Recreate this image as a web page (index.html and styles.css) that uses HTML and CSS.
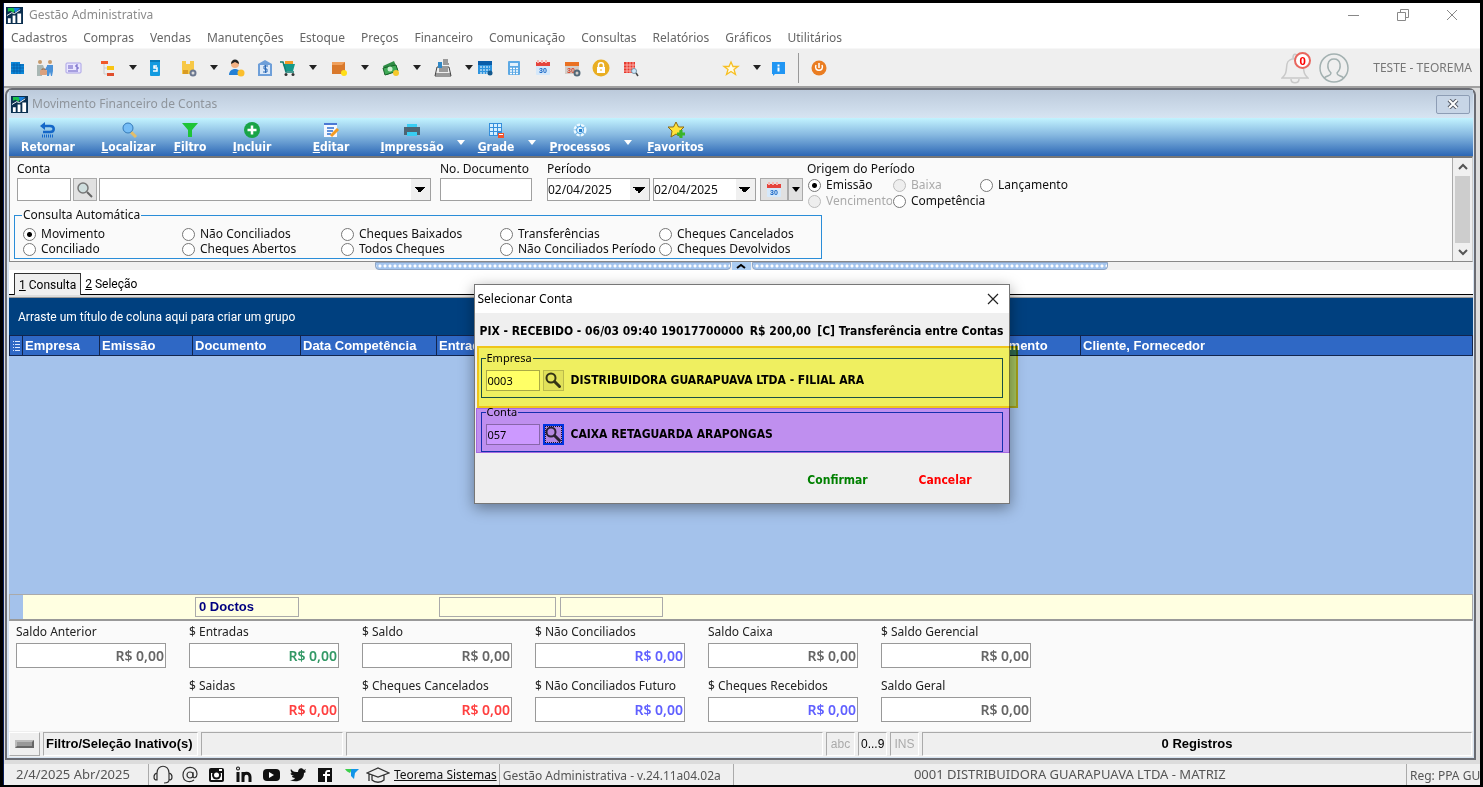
FILE: index.html
```html
<!DOCTYPE html>
<html lang="pt-BR">
<head>
<meta charset="UTF-8">
<meta name="viewport" content="width=device-width, initial-scale=1.0">
<title>Gestão Administrativa</title>
<link rel="stylesheet" href="styles.css">
</head>
<body>
<!-- símbolos reutilizados -->
<svg width="0" height="0" class="defs">
    <symbol id="app" viewBox="0 0 18 18"><rect width="18" height="18" fill="#0b2f4f"/><path d="M2 1h9l-3 5-3-2-3 1z" fill="#19c24a"/><path d="M8 1h7l-5 5z" fill="#1780e0"/><path d="M2 12h3v5H2zM7 9h3v8H7zM12 7h4v10h-4z" fill="#fff"/><path d="M1 9l5-3 3 1 6-4" stroke="#fff" fill="none"/></symbol>
    <symbol id="lupa" viewBox="0 0 18 18"><path d="M10.500 10.500l5 5" stroke="#333" stroke-width="3" stroke-linecap="round"/><circle cx="7" cy="7" r="4.500" fill="none" stroke="#333" stroke-width="2"/></symbol>
    <symbol id="cal" viewBox="0 0 18 18"><rect x="2" y="3" width="14" height="13" rx="1" fill="#d5e8fa"/><path d="M2 3h14v4H2z" fill="#e5443c"/><path d="M4 1v3M8 1v3M12 1v3" stroke="#f6b9b4" stroke-width="2"/><text x="9" y="14" text-anchor="middle" font-size="7" font-weight="bold" fill="#1463c4">30</text></symbol>
</svg>

<div class="app-window">
    <header class="titlebar">
        <svg class="app-icon"><use href="#app"/></svg>
        <span>Gestão Administrativa</span>
        <div class="window-controls">
            <button aria-label="Minimizar"><svg viewBox="0 0 12 12"><path d="M0 6.500h11" stroke="#888"/></svg></button>
            <button aria-label="Restaurar"><svg viewBox="0 0 12 12" fill="none" stroke="#888"><path d="M.5 3.500h8v8h-8zM3.500 3V.5h8v8H9"/></svg></button>
            <button aria-label="Fechar"><svg viewBox="0 0 12 12"><path d="M1 1l10 10M11 1L1 11" stroke="#888"/></svg></button>
        </div>
    </header>

    <nav class="menubar">
        <a href="#">Cadastros</a><a href="#">Compras</a><a href="#">Vendas</a><a href="#">Manutenções</a><a href="#">Estoque</a><a href="#">Preços</a><a href="#">Financeiro</a><a href="#">Comunicação</a><a href="#">Consultas</a><a href="#">Relatórios</a><a href="#">Gráficos</a><a href="#">Utilitários</a>
    </nav>

    <div class="toolbar">
        <button class="tool" aria-label="Empresa"><svg viewBox="0 0 18 18"><path d="M3 3h9v2h4v10H3z" fill="#0b87d9"/><path d="M3 6h13M3 9h13M3 12h13M6 4v11M9 4v11M12 5v10" stroke="#0658a0" stroke-width=".7"/></svg></button>
        <button class="tool" aria-label="Clientes"><svg viewBox="0 0 18 18"><circle cx="4" cy="3" r="2" fill="#c69a6b"/><circle cx="14" cy="3" r="2" fill="#c69a6b"/><path d="M1 6h6l2 5-3 1v5H1z" fill="#a9b7b4"/><path d="M11 6h6v6l-1 5h-1l-1-4-1 4h-2V11l-3 1 3-5z" fill="#4b92d8"/><rect x="4" y="11" width="7" height="5" rx="1" fill="#dba17e"/><path d="M6 11v-1h3v1" stroke="#a5673f" fill="none"/></svg></button>
        <button class="tool" aria-label="Cheque"><svg viewBox="0 0 18 18"><rect x="1" y="4" width="15" height="10" rx="1" fill="#e9e6ff" stroke="#aaa2e6"/><path d="M3 7h5M3 9h5M3 12h10M13 6h-2v2h2v2h-2" stroke="#6558c0" fill="none"/></svg></button>
        <div class="split"><button aria-label="Plano de contas"><svg viewBox="0 0 18 18"><path d="M3 2h7v3H3z" fill="#f1592a"/><path d="M9 7h7v4H9z" fill="#f9c513"/><path d="M9 14h7v3H9z" fill="#e04e2c"/><path d="M6 5v10h3M6 9h3" stroke="#ccc" fill="none"/></svg></button><button class="caret" aria-label="Mais opções do plano"></button></div>
        <button class="tool" aria-label="Celular"><svg viewBox="0 0 18 18"><rect x="4" y="1" width="10" height="16" rx="1" fill="#139be0"/><path d="M4 1h10v2H4z" fill="#087bb9"/><path d="M11 7H8v2h3v3H7" stroke="#fff" stroke-width="1.500" fill="none"/></svg></button>
        <div class="split"><button aria-label="Produtos"><svg viewBox="0 0 18 18"><path d="M3 2h4v3h4V2h4v13H3z" fill="#f7c846"/><path d="M4 11h5v4H4z" fill="#d99c24"/><circle cx="14" cy="14" r="2.500" fill="#ddd" stroke="#6c7890" stroke-width="2"/></svg></button><button class="caret" aria-label="Mais opções de produtos"></button></div>
        <button class="tool" aria-label="Vendedor"><svg viewBox="0 0 18 18"><circle cx="8" cy="5" r="4" fill="#f4b183"/><path d="M4 5c0-6 8-6 8 0l-4-2z" fill="#222"/><path d="M2 16c0-8 12-8 12 0z" fill="#2380d6"/><circle cx="14" cy="14" r="3.500" fill="#fbbf2e"/></svg></button>
        <button class="tool" aria-label="Banco"><svg viewBox="0 0 18 18"><path d="M9 1l7 4v12H2V5z" fill="#6e9fd9"/><path d="M4 6h10v9H4z" fill="#dce9f8"/><path d="M12 7H8v3h3v3H7M9.500 6v8" stroke="#2d6bb7" fill="none"/></svg></button>
        <div class="split split-tight"><button aria-label="Carrinho"><svg viewBox="0 0 18 18"><path d="M6 2h8v4H6z" fill="#f39a25"/><path d="M4 5h12l-2 7H7z" fill="#159a8a"/><path d="M1 3h3l3 10h8" stroke="#107c70" fill="none" stroke-width="1.500"/><circle cx="7" cy="15.500" r="1.500" fill="#333"/><circle cx="14" cy="15.500" r="1.500" fill="#333"/></svg></button><button class="caret" aria-label="Mais opções do carrinho"></button></div>
        <div class="split"><button aria-label="Caixas"><svg viewBox="0 0 18 18"><path d="M2 3h13v12H2z" fill="#d9792c"/><path d="M2 3h13l-3 3H2z" fill="#efa05d"/><circle cx="14" cy="14" r="3" fill="#ffdf18"/></svg></button><button class="caret" aria-label="Mais opções de caixas"></button></div>
        <div class="split"><button aria-label="Dinheiro"><svg viewBox="0 0 18 18"><path d="M1 7l11-5 4 9-11 5z" fill="#2f8d46"/><path d="M1 9l13-3 2 6-13 4z" fill="#3faa57" stroke="#176229"/><circle cx="8" cy="10" r="2.500" fill="#c9efcf"/><circle cx="14" cy="14" r="3" fill="#f6c92d"/></svg></button><button class="caret" aria-label="Mais opções de dinheiro"></button></div>
        <div class="split"><button aria-label="Caixa registradora"><svg viewBox="0 0 18 18"><path d="M3 8h12l2 9H1z" fill="#eee" stroke="#444"/><path d="M4 3h4v6H4z" fill="#3188c6"/><path d="M9 1h5M9 3h5M9 5h6M5 10h9M5 12h9M1 15h16" stroke="#444"/></svg></button><button class="caret" aria-label="Mais opções da caixa"></button></div>
        <div class="tool-group">
            <button class="tool" aria-label="Agenda"><svg viewBox="0 0 18 18"><path d="M2 2h14v13H2z" fill="#2d94df"/><path d="M2 2h14v4H2z" fill="#0b5da8"/><path d="M4 8h10M4 11h10M4 14h8" stroke="#fff" stroke-dasharray="2 1"/><circle cx="14" cy="14" r="2.500" fill="#14598e"/></svg></button>
            <button class="tool" aria-label="Calculadora"><svg viewBox="0 0 18 18"><rect x="3" y="2" width="12" height="14" rx="1" fill="#5da9e4"/><path d="M5 4h8v3H5z" fill="#e3f2fd"/><path d="M5 9.500h8M5 12h8M5 14.500h8" stroke="#fff" stroke-width="1.500" stroke-dasharray="2 1"/></svg></button>
            <button class="tool" aria-label="Calendário"><svg><use href="#cal"/></svg></button>
            <button class="tool" aria-label="Configurar calendário"><svg viewBox="0 0 18 18"><path d="M2 3h14v12H2z" fill="#d3cdc8"/><path d="M2 3h14v4H2z" fill="#ea7122"/><text x="8" y="14" text-anchor="middle" font-size="7" font-weight="bold" fill="#d84228">30</text><circle cx="14" cy="14" r="2.500" fill="none" stroke="#526878" stroke-width="2"/></svg></button>
            <button class="tool" aria-label="Bloquear"><svg viewBox="0 0 18 18"><circle cx="9" cy="9" r="8.500" fill="#e9ae22"/><path d="M5 8h8v6H5z" fill="#fff"/><path d="M6.500 8V6c0-3 5-3 5 0v2" stroke="#fff" stroke-width="1.500" fill="none"/><path d="M9 10v2" stroke="#e9ae22"/></svg></button>
            <button class="tool" aria-label="Pesquisar planilha"><svg viewBox="0 0 18 18"><path d="M3 3h11v11H3z" fill="#e6392e"/><path d="M3 6h11M3 9h11M3 12h11M6 3v11M9 3v11M12 3v11" stroke="#ffc2bd" stroke-width=".8"/><circle cx="13" cy="12" r="2.500" fill="#cce7fa" stroke="#7c97a9"/><path d="M15 14l2 3" stroke="#444" stroke-width="1.500"/></svg></button>
        </div>
        <div class="split split-star"><button aria-label="Favoritos"><svg viewBox="0 0 18 18"><path d="M9 3l2 4.500h5l-4 3 1.500 5L9 12.500l-4.500 3 1.500-5-4-3h5z" fill="#fffbe6" stroke="#f7bf22" stroke-width="1.300"/></svg></button><button class="caret" aria-label="Mais favoritos"></button></div>
        <button class="tool" aria-label="Informações"><svg viewBox="0 0 18 18"><path d="M2 3h13v12H5l-2 2v-2H2z" fill="#2196f3"/><path d="M8.500 5.500v2M8.500 8.500v4" stroke="#fff" stroke-width="2"/></svg></button>
        <span class="tool-separator"></span>
        <button class="tool" aria-label="Sair"><svg viewBox="0 0 18 18"><circle cx="9" cy="9" r="7.500" fill="#ea7d22"/><path d="M6 6c-3 7 9 7 6 0M9 4v5" stroke="#fff" stroke-width="1.500" fill="none"/></svg></button>
        <div class="user">
            <button class="bell" aria-label="Notificações"><svg viewBox="0 0 28 32" fill="none" stroke="#c9c9c9" stroke-width="1.500"><path d="M1 26c5-4 4-8 5-14 1-7 15-7 16 0 1 6 0 10 5 14zM10 27c0 5 8 5 8 0M12 6c0-5 4-5 4 0"/></svg><span class="badge">0</span></button>
            <svg class="avatar" viewBox="0 0 30 30" fill="none" stroke="#a3b1b1" stroke-width="1.500"><circle cx="15" cy="15" r="14"/><path d="M5 25c4-3 7-2 7-5-5-5-4-14 3-14s8 9 3 14c0 3 3 2 7 5"/></svg>
            <span>TESTE - TEOREMA</span>
        </div>
    </div>

    <main class="mdi">
        <section class="child-window">
            <header class="child-title">
                <svg class="app-icon"><use href="#app"/></svg>
                <span>Movimento Financeiro de Contas</span>
                <button class="child-close" aria-label="Fechar janela"><svg viewBox="0 0 12 10"><path d="M2 1l8 8M10 1L2 9" stroke="#555b66" stroke-width="4"/><path d="M2 1l8 8M10 1L2 9" stroke="#fff" stroke-width="2"/></svg></button>
            </header>

            <div class="ribbon">
                <button><svg viewBox="0 0 18 18"><path d="M5 5h6c5 0 5 6 0 6H4" stroke="#1467c8" stroke-width="2.500" fill="none"/><path d="M6 1v8L1 5z" fill="#1467c8"/><path d="M3 15h11" stroke="#1467c8" stroke-width="3" stroke-dasharray="1 1"/></svg>Retornar</button>
                <button><svg viewBox="0 0 18 18"><path d="M11 11l5 5" stroke="#e4bd68" stroke-width="3"/><circle cx="8" cy="7" r="5" fill="#76bdf6" stroke="#357ab8"/></svg><span><u>L</u>ocalizar</span></button>
                <button><svg viewBox="0 0 18 18"><path d="M1 2h16l-6 7v7H7V9z" fill="#1fc437"/></svg><span><u>F</u>iltro</span></button>
                <button><svg viewBox="0 0 18 18"><circle cx="9" cy="9" r="8" fill="#19a447"/><path d="M9 4.500v9M4.500 9h9" stroke="#fff" stroke-width="2.500"/></svg><span><u>I</u>ncluir</span></button>
                <button><svg viewBox="0 0 18 18"><path d="M2 2h13v14H2z" fill="#f5f8ff"/><path d="M2 2h13v2H2z" fill="#4a78d4"/><path d="M5 7h7M5 10h6M5 13h4" stroke="#316fd0" stroke-width="1.500"/><path d="M9 15l7-7" stroke="#f39b24" stroke-width="3"/></svg><span><u>E</u>ditar</span></button>
                <button><svg viewBox="0 0 18 18"><path d="M4 3h10v4H4z" fill="#38cdf3"/><path d="M1 6h16v8H1z" fill="#4d6473"/><path d="M4 11h10v4H4z" fill="#38cdf3"/></svg><span><u>I</u>mpressão</span></button>
                <button class="ribbon-caret" aria-label="Opções de impressão"></button>
                <button><svg viewBox="0 0 18 18"><path d="M2 2h13v13H2z" fill="#358fdb"/><path d="M3 3h3v3H3zM7 3h3v3H7zM11 3h3v3h-3zM3 7h3v3H3zM7 7h3v3H7zM11 7h3v3h-3zM3 11h3v3H3zM7 11h3v3H7z" fill="#d5efff"/><path d="M11 12h6v5h-6z" fill="#f0542d"/><path d="M12 13.500h4" stroke="#fff"/></svg><span><u>G</u>rade</span></button>
                <button class="ribbon-caret" aria-label="Opções de grade"></button>
                <button><svg viewBox="0 0 18 18"><circle cx="9" cy="9" r="5" fill="#55a9e8" stroke="#eaf8ff" stroke-width="3" stroke-dasharray="3 1"/><circle cx="9" cy="9" r="3.500" fill="#e4f5ff" stroke="#4a9de0"/><path d="M8 8h3v3H8z" fill="#2a7fc9"/></svg><span><u>P</u>rocessos</span></button>
                <button class="ribbon-caret" aria-label="Opções de processos"></button>
                <button><svg viewBox="0 0 18 18"><path d="M9 1l2.500 5H17l-4 4 1 6-5-3-5 3 1-6-4-4h5.500z" fill="#ffe23a" stroke="#8c6b14"/><path d="M14 9v8M10 13h8" stroke="#3ab52a" stroke-width="3"/></svg><span><u>F</u>avoritos</span></button>
            </div>

            <form class="filters">
                <div class="filters-body">
                    <div class="filter-row">
                        <div class="field">
                            <label for="conta">Conta</label>
                            <div class="controls">
                                <input id="conta" class="box conta" type="text">
                                <button type="button" class="grey-btn search" aria-label="Pesquisar conta"><svg viewBox="0 0 18 18"><path d="M11 11l5 5" stroke="#666" stroke-width="2"/><circle cx="7" cy="7" r="5" fill="#cfdede" stroke="#777" stroke-width="1.500"/></svg></button>
                                <select class="box combo" aria-label="Nome da conta"><option></option></select>
                            </div>
                        </div>
                        <div class="field field-doc">
                            <label for="doc">No. Documento</label>
                            <div class="controls"><input id="doc" class="box doc" type="text"></div>
                        </div>
                        <div class="field">
                            <label for="inicio">Período</label>
                            <div class="controls period">
                                <select id="inicio" class="box date"><option>02/04/2025</option></select>
                                <select class="box date" aria-label="Fim do período"><option>02/04/2025</option></select>
                                <div class="cal-split">
                                    <button type="button" class="grey-btn cal" aria-label="Calendário do período"><svg><use href="#cal"/></svg></button><button type="button" class="grey-btn cal-drop" aria-label="Opções do período"><i class="down"></i></button>
                                </div>
                            </div>
                        </div>
                        <div class="field origin">
                            <span class="origin-title">Origem do Período</span>
                            <div class="origin-grid">
                                <label><input type="radio" name="origem" checked>Emissão</label>
                                <label class="off"><input type="radio" name="origem" disabled>Baixa</label>
                                <label><input type="radio" name="origem">Lançamento</label>
                                <label class="off"><input type="radio" name="origem" disabled>Vencimento</label>
                                <label><input type="radio" name="origem">Competência</label>
                            </div>
                        </div>
                    </div>
                    <fieldset class="auto-query">
                        <legend>Consulta Automática</legend>
                        <div class="radio-grid">
                            <label><input type="radio" name="auto" checked>Movimento</label>
                            <label><input type="radio" name="auto">Não Conciliados</label>
                            <label><input type="radio" name="auto">Cheques Baixados</label>
                            <label><input type="radio" name="auto">Transferências</label>
                            <label><input type="radio" name="auto">Cheques Cancelados</label>
                            <label><input type="radio" name="auto">Conciliado</label>
                            <label><input type="radio" name="auto">Cheques Abertos</label>
                            <label><input type="radio" name="auto">Todos Cheques</label>
                            <label><input type="radio" name="auto">Não Conciliados Período</label>
                            <label><input type="radio" name="auto">Cheques Devolvidos</label>
                        </div>
                    </fieldset>
                </div>
                <div class="scrollbar">
                    <button type="button" aria-label="Rolar para cima"><svg viewBox="0 0 10 10"><path d="M1 7l4-4 4 4" stroke="#555" stroke-width="2" fill="none"/></svg></button>
                    <span class="thumb"></span>
                    <button type="button" aria-label="Rolar para baixo"><svg viewBox="0 0 10 10"><path d="M1 3l4 4 4-4" stroke="#555" stroke-width="2" fill="none"/></svg></button>
                </div>
            </form>

            <div class="splitter">
                <span class="dots"></span>
                <button aria-label="Recolher filtros"><svg viewBox="0 0 10 6"><path d="M1 5l4-3 4 3" stroke="#000" stroke-width="2" fill="none"/></svg></button>
                <span class="dots"></span>
            </div>

            <div class="tabs">
                <button class="tab active"><span><u>1</u> Consulta</span></button>
                <button class="tab"><span><u>2</u> Seleção</span></button>
            </div>

            <div class="grid">
                <p class="group-bar">Arraste um título de coluna aqui para criar um grupo</p>
                <table class="grid-head">
                    <colgroup><col class="c-mark"><col class="c-empresa"><col class="c-emissao"><col class="c-doc"><col class="c-data"><col class="c-entradas"><col class="c-meio"><col class="c-lanc"><col></colgroup>
                    <thead>
                        <tr>
                            <th><svg viewBox="0 0 9 12"><path d="M1 1.500h1M1 4.500h1M1 7.500h1M1 10.500h1M3 1.500h5M3 4.500h5M3 7.500h5M3 10.500h5" stroke="#dce8ff"/></svg></th>
                            <th>Empresa</th><th>Emissão</th><th>Documento</th><th>Data Competência</th><th>Entradas</th><th></th><th>Lançamento</th><th>Cliente, Fornecedor</th>
                        </tr>
                    </thead>
                </table>
                <div class="grid-body"></div>
                <div class="grid-foot">
                    <span class="foot-mark"></span>
                    <span class="foot-box foot-docs">0 Doctos</span>
                    <span class="foot-box foot-in"></span>
                    <span class="foot-box foot-out"></span>
                </div>
            </div>

            <div class="summary">
                <div class="total"><label for="t1">Saldo Anterior</label><input id="t1" value="R$ 0,00" readonly></div>
                <div class="total green"><label for="t2">$ Entradas</label><input id="t2" value="R$ 0,00" readonly></div>
                <div class="total"><label for="t3">$ Saldo</label><input id="t3" value="R$ 0,00" readonly></div>
                <div class="total blue"><label for="t4">$ Não Conciliados</label><input id="t4" value="R$ 0,00" readonly></div>
                <div class="total"><label for="t5">Saldo Caixa</label><input id="t5" value="R$ 0,00" readonly></div>
                <div class="total"><label for="t6">$ Saldo Gerencial</label><input id="t6" value="R$ 0,00" readonly></div>
                <div class="total red second-row"><label for="t7">$ Saidas</label><input id="t7" value="R$ 0,00" readonly></div>
                <div class="total red"><label for="t8">$ Cheques Cancelados</label><input id="t8" value="R$ 0,00" readonly></div>
                <div class="total blue"><label for="t9">$ Não Conciliados Futuro</label><input id="t9" value="R$ 0,00" readonly></div>
                <div class="total blue"><label for="t10">$ Cheques Recebidos</label><input id="t10" value="R$ 0,00" readonly></div>
                <div class="total"><label for="t11">Saldo Geral</label><input id="t11" value="R$ 0,00" readonly></div>
            </div>

            <footer class="child-status">
                <button class="led" aria-label="Filtro"><span></span></button>
                <span class="cell cell-filter">Filtro/Seleção Inativo(s)</span>
                <span class="cell cell-a"></span>
                <span class="cell cell-b"></span>
                <span class="cell cell-key off">abc</span>
                <span class="cell cell-key">0...9</span>
                <span class="cell cell-key off">INS</span>
                <span class="cell cell-count">0 Registros</span>
            </footer>
        </section>
    </main>

    <footer class="statusbar">
        <span class="sb-date">2/4/2025 Abr/2025</span>
        <div class="social">
            <a href="#" aria-label="Suporte"><svg viewBox="0 0 20 20" fill="none" stroke="#333" stroke-width="1.200"><path d="M4 13V9c0-9 12-9 12 0v7c0 2-2 3-5 3M4 9c-4 1-4 7 0 7zM16 9c4 1 4 7 0 7z"/></svg></a>
            <a href="#" aria-label="E-mail"><svg viewBox="0 0 20 20" fill="none" stroke="#333" stroke-width="1.200"><circle cx="10" cy="11" r="3"/><path d="M13 8v4c0 3 4 2 4-2 0-9-14-9-14 1 0 7 7 8 11 5"/></svg></a>
            <a href="#" aria-label="Instagram"><svg viewBox="0 0 20 20"><rect x="2" y="4" width="15" height="14" rx="2" fill="#111"/><path d="M4 9h11v7H4z" fill="#fff"/><circle cx="9.500" cy="11" r="4.500" fill="#111"/><circle cx="9.500" cy="11" r="2.500" fill="#fff"/><path d="M12 5h3v2h-3z" fill="#fff"/></svg></a>
            <a href="#" aria-label="LinkedIn"><svg viewBox="0 0 20 20" fill="none" stroke="#111" stroke-width="3"><path d="M4 8v10M9 8v10M9 13c0-5 7-5 7 0v5"/><circle cx="4" cy="4.500" r=".5"/></svg></a>
            <a href="#" aria-label="YouTube"><svg viewBox="0 0 20 20"><rect x="2" y="5" width="17" height="12" rx="4" fill="#111"/><path d="M8 8l5 3-5 3z" fill="#fff"/></svg></a>
            <a href="#" aria-label="Twitter"><svg viewBox="0 0 20 20"><path d="M3 5c2 3 4 3 7 3 0-4 4-5 6-2l2-1-1 2 1 1-2 1c0 8-8 10-14 7 2 0 4 0 5-2-2 0-3-1-3-2h2c-3-1-4-2-3-3l1 .5C3 8 2 6 3 5z" fill="#111"/></svg></a>
            <a href="#" aria-label="Facebook"><svg viewBox="0 0 20 20"><path d="M3 4h14v14H3z" fill="#111"/><path d="M15 7h-2c-2 0-2 1-2 3v8M8 11h7" stroke="#fff" stroke-width="2" fill="none"/></svg></a>
            <a href="#" aria-label="Site"><svg viewBox="0 0 20 20"><path d="M3 5h7l-2 4C6 8 4 7 3 5z" fill="#3dcf4b"/><path d="M9 5h8l-4 4-1 6-3-3z" fill="#1395e8"/></svg></a>
            <a href="#" class="cap" aria-label="Cursos"><svg viewBox="0 0 24 20" fill="none" stroke="#333" stroke-width="1.300"><path d="M1 9l11-5 11 5-11 4zM6 11v5c3 3 9 3 12 0v-5M3 10v7"/></svg></a>
        </div>
        <a href="#" class="sb-link">Teorema Sistemas</a>
        <span class="sb-version">Gestão Administrativa - v.24.11a04.02a</span>
        <span class="sb-company">0001 DISTRIBUIDORA GUARAPUAVA LTDA - MATRIZ</span>
        <span class="sb-reg">Reg: PPA GUARAPUAVA</span>
    </footer>
</div>

<div class="dialog" role="dialog" aria-label="Selecionar Conta">
    <header class="dialog-title">
        <span>Selecionar Conta</span>
        <button aria-label="Fechar diálogo"><svg viewBox="0 0 12 12"><path d="M1 1l10 10M11 1L1 11" stroke="#222" stroke-width="1.200"/></svg></button>
    </header>
    <p class="dialog-info"><span>PIX - RECEBIDO - 06/03 09:40 19017700000</span><span>R$ 200,00</span><span>[C] Transferência entre Contas</span></p>
    <fieldset class="pick">
        <legend>Empresa</legend>
        <input type="text" value="0003" aria-label="Código da empresa">
        <button aria-label="Pesquisar empresa"><svg><use href="#lupa"/></svg></button>
        <strong>DISTRIBUIDORA GUARAPUAVA LTDA - FILIAL ARA</strong>
    </fieldset>
    <fieldset class="pick">
        <legend>Conta</legend>
        <input type="text" value="057" aria-label="Código da conta">
        <button class="focused" aria-label="Pesquisar conta destino"><svg><use href="#lupa"/></svg></button>
        <strong>CAIXA RETAGUARDA ARAPONGAS</strong>
    </fieldset>
    <div class="dialog-actions">
        <button class="confirm">Confirmar</button>
        <button class="cancel">Cancelar</button>
    </div>
</div>
<!-- marcações de destaque sobre o diálogo -->
<div class="mark mark-yellow"></div>
<div class="mark mark-purple"></div>
</body>
</html>
```

FILE: styles.css
```css
* {
    box-sizing: border-box;
}

body {
    margin: 0;
    min-height: 100vh;
    display: flex;
    position: relative;
    background-color: #000;
    font-family: "Noto Sans", "Open Sans", sans-serif;
    font-size: 12px;
    line-height: 16px;
    color: #222;
    overflow: hidden;
}

button {
    border: 0;
    padding: 0;
    background: none;
    font: inherit;
    color: inherit;
    display: flex;
    align-items: center;
    justify-content: center;
}

input, select {
    font: inherit;
    color: inherit;
}

a {
    color: inherit;
    text-decoration: none;
}

p {
    margin: 0;
}

svg {
    display: block;
    flex: none;
    width: 18px;
    height: 18px;
}

svg text {
    font-family: "Liberation Sans", sans-serif;
}

.defs {
    position: absolute;
    width: 0;
    height: 0;
}

.app-window {
    flex: 1;
    min-width: 0;
    margin: 3px 3px 2px 3px;
    border-left: 1px solid #0a1f5c;
    display: flex;
    flex-direction: column;
    background-color: #fff;
}

/* barra de título */
.titlebar {
    height: 24px;
    display: flex;
    align-items: center;
    gap: 6px;
    padding-left: 2px;
    color: #8c8c8c;
}

.app-icon {
    width: 17px;
    height: 17px;
}

.window-controls {
    margin-left: auto;
    margin-right: 4px;
    display: flex;
    height: 20px;
}

.window-controls button {
    width: 49px;
}

.window-controls svg {
    width: 12px;
    height: 12px;
}

.menubar {
    height: 21px;
    display: flex;
    align-items: center;
    gap: 16px;
    padding-left: 7px;
    color: #666;
}

/* barra de ferramentas */
.toolbar {
    height: 38px;
    display: flex;
    align-items: center;
    background-color: #efefef;
    border-top: 1px solid #f7f7f7;
}

.tool {
    width: 29px;
    height: 30px;
}

.toolbar > .tool:first-child {
    width: 26px;
}

.split {
    width: 52px;
    height: 30px;
    padding: 0 3px 0 10px;
    display: flex;
    align-items: center;
    justify-content: space-between;
}

.split-tight {
    width: 41px;
    padding-left: 0;
}

.split-star {
    margin-left: 68px;
}

.caret {
    border: 4px solid transparent;
    border-top: 5px solid #222;
    border-bottom: 0;
}

.tool-group {
    display: flex;
    margin-left: -6px;
}

.tool-separator {
    width: 1px;
    height: 30px;
    margin: 0 5px;
    background-color: #999;
}

.user {
    margin-left: auto;
    margin-right: 8px;
    display: flex;
    align-items: center;
    color: #777;
}

.bell {
    position: relative;
    margin-right: 10px;
}

.bell svg {
    width: 28px;
    height: 32px;
}

.badge {
    position: absolute;
    top: 0;
    right: -2px;
    width: 17px;
    height: 17px;
    border: 2px solid #e8665e;
    border-radius: 9px;
    background-color: #fff;
    color: #f00;
    font-size: 11px;
    font-weight: bold;
    line-height: 13px;
}

.avatar {
    width: 30px;
    height: 30px;
    margin-right: 24px;
}

/* área da janela filha */
.mdi {
    flex: 1;
    display: flex;
    padding: 2px 4px 4px 1px;
    background: linear-gradient(#a0a0a0 2px, #dcdcdc 2px);
}

.child-window {
    flex: 1;
    min-width: 0;
    display: flex;
    flex-direction: column;
    border: 2px solid #6a6c73;
    border-radius: 7px 7px 0 0;
    padding: 0 1px 1px 2px;
    background-color: #d7e4f2;
}

.child-title {
    height: 28px;
    display: flex;
    align-items: center;
    gap: 4px;
    padding: 0 3px 0 2px;
    background: linear-gradient(#bccadb, #d6e4f2);
    color: #8f959c;
}

.child-close {
    width: 34px;
    height: 19px;
    margin-left: auto;
    border: 1px solid #8d9db5;
    border-radius: 2px;
    background-color: #c7d5e6;
}

.child-close svg {
    width: 12px;
    height: 10px;
}

.ribbon {
    height: 38px;
    display: grid;
    grid-template-columns: 78px 83px 40px 84px 74px 88px 10px 60px 12px 84px 12px 83px;
    padding-top: 3px;
    background: linear-gradient(#c2f3ff, #86b8e0 45%, #2c67b5);
    color: #fff;
    font-family: "DejaVu Sans Condensed", "DejaVu Sans", sans-serif;
    font-weight: bold;
    text-shadow: 1px 1px 1px #2b5a95;
}

.ribbon button {
    flex-direction: column;
    justify-content: flex-start;
}

.ribbon .ribbon-caret {
    align-self: end;
    justify-self: center;
    margin-bottom: 11px;
    border: 4px solid transparent;
    border-top: 5px solid #fff;
    border-bottom: 0;
}

/* filtros */
.filters {
    height: 106px;
    display: flex;
    border: 1px solid #888;
    border-top: 2px solid #777;
    border-right-color: #ccc;
    background-color: #fafafa;
    color: #111;
    overflow: hidden;
}

.filters-body {
    flex: 1;
    padding: 3px 0 0 4px;
}

.filter-row {
    display: flex;
    height: 46px;
    padding-left: 3px;
}

.field {
    display: flex;
    flex-direction: column;
}

.field-doc {
    margin: 0 15px 0 9px;
}

.controls {
    display: flex;
    gap: 2px;
    height: 23px;
    margin-top: 1px;
}

.period {
    gap: 3px;
}

.box {
    height: 23px;
    border: 1px solid #a0a0a0;
    border-radius: 0;
    background-color: #fff;
    padding: 0 2px;
}

.conta {
    width: 54px;
}

select.box {
    appearance: none;
    background-image: linear-gradient(to left bottom, #000 50%, transparent 50%), linear-gradient(to right bottom, #000 50%, transparent 50%), linear-gradient(#f0f0f0, #f0f0f0);
    background-size: 6px 6px, 6px 6px, 19px 100%;
    background-position: right 10px center, right 4px center, right center;
    background-repeat: no-repeat;
}

.combo {
    width: 332px;
}

.doc {
    width: 92px;
}

.date {
    width: 103px;
    padding-left: 0;
}

.grey-btn {
    height: 23px;
    border: 1px solid #aaa;
    background-color: #e1e1e1;
}

.search {
    width: 24px;
}

.cal-split {
    display: flex;
    margin-left: 1px;
}

.cal {
    width: 28px;
}

.cal-drop {
    width: 15px;
}

.down {
    border: 4px solid transparent;
    border-top: 5px solid #000;
    border-bottom: 0;
}

.origin {
    margin-left: 4px;
}

.origin-grid {
    display: grid;
    grid-template-columns: 85px 87px 120px;
}

.origin-grid label, .radio-grid label {
    display: flex;
    align-items: center;
    height: 16px;
    white-space: nowrap;
}

.origin-grid .off {
    overflow: hidden;
}

.off {
    color: #aaa;
}

input[type="radio"] {
    appearance: none;
    flex: none;
    width: 13px;
    height: 13px;
    margin: 0 5px 0 1px;
    border: 1px solid #777;
    border-radius: 50%;
    background-color: #fff;
}

input[type="radio"]:checked {
    background-image: radial-gradient(#000 2px, transparent 3px);
}

input[type="radio"]:disabled {
    border-color: #bbb;
    background-color: #eee;
}

.auto-query {
    width: 808px;
    margin: 0;
    padding: 3px 0 0 7px;
    border: 1px solid #2a8dd8;
    height: 52px;
}

.auto-query legend {
    padding: 0 1px;
}

.radio-grid {
    display: grid;
    grid-template-columns: repeat(5, 159px);
    grid-auto-rows: 15px;
}

.scrollbar {
    width: 20px;
    display: flex;
    flex-direction: column;
    border-left: 1px solid #aaa;
    background-color: #f0f0f0;
}

.scrollbar button {
    height: 18px;
}

.scrollbar svg {
    width: 10px;
    height: 10px;
}

.thumb {
    flex: 1;
    margin: 0 2px;
    background-color: #cdcdcd;
}

.splitter {
    height: 8px;
    display: flex;
    justify-content: center;
    background-color: #f0f0f0;
}

.splitter .dots {
    width: 356px;
    background: radial-gradient(circle at 2px 2px, #fff 1px, transparent 2px) 2px 1px / 5px 8px #a4c5ee;
    border: 1px solid #8fa5c4;
    border-radius: 0 0 4px 4px;
}

.splitter button {
    width: 19px;
    margin: 0 1px;
    background-color: #a9cbf1;
}

.splitter svg {
    width: 10px;
    height: 6px;
}

/* abas */
.tabs {
    height: 27px;
    display: flex;
    align-items: flex-start;
    padding: 3px 0 0 5px;
    background: linear-gradient(#fff 24px, #000 24px, #000 25px, #ddd 25px);
    color: #000;
    font-family: Roboto, "Liberation Sans", sans-serif;
}

.tab {
    height: 22px;
    padding: 0 4px;
}

.tab.active {
    border: 1px solid #333;
    border-bottom: 0;
    background-color: #efefef;
}

/* grade */
.grid, .child-status {
    font-family: "Liberation Sans", Arial, sans-serif;
}

.grid {
    flex: 1;
    display: flex;
    flex-direction: column;
    border-top: 1px solid #999;
}

.group-bar {
    height: 38px;
    margin-bottom: -1px;
    padding: 11px 9px;
    background-color: #00407f;
    color: #fff;
    font-family: Roboto, "Liberation Sans", sans-serif;
}

.grid-head {
    width: 100%;
    table-layout: fixed;
    border-collapse: collapse;
    background-color: #2f68c5;
    color: #fff;
}

.grid-head th {
    height: 20px;
    padding: 0 2px;
    border: 1px solid #12254d;
    font-size: 13px;
    text-align: left;
    white-space: nowrap;
}

.grid-head svg {
    width: 9px;
    height: 12px;
}

.c-mark { width: 13px; }
.c-empresa { width: 77px; }
.c-emissao { width: 93px; }
.c-doc { width: 108px; }
.c-data { width: 136px; }
.c-entradas { width: 122px; }
.c-meio { width: 410px; }
.c-lanc { width: 112px; }

.grid-body {
    flex: 1;
    background-color: #a4c2eb;
}

.grid-foot {
    height: 27px;
    display: flex;
    align-items: center;
    border: 1px solid #aaa;
    border-bottom: 2px solid #999;
    background-color: #ffffe1;
    color: #000080;
    font-size: 13px;
    font-weight: bold;
}

.foot-mark {
    width: 13px;
    height: 100%;
    background-color: #a4c2eb;
}

.foot-box {
    height: 20px;
    border: 1px solid #aaa;
    padding: 1px 3px;
}

.foot-docs {
    width: 104px;
    margin-left: 172px;
}

.foot-in {
    width: 117px;
    margin: 0 4px 0 140px;
}

.foot-out {
    width: 103px;
}

/* totais */
.summary {
    height: 110px;
    display: grid;
    grid-template-columns: repeat(6, 150px);
    grid-auto-rows: 54px;
    column-gap: 23px;
    padding: 3px 7px;
    background-color: #fafafa;
}

.second-row {
    grid-column: 2;
}

.total {
    display: flex;
    flex-direction: column;
    gap: 3px;
}

.total input {
    width: 100%;
    height: 25px;
    padding: 0 1px;
    border: 1px solid #999;
    background-color: #fff;
    color: #666;
    font-size: 14px;
    font-weight: 600;
    text-align: right;
}

.total.green input { color: #339966; }
.total.red input { color: #ff4040; }
.total.blue input { color: #6060ff; }

.child-status {
    height: 26px;
    display: flex;
    gap: 3px;
    padding: 1px 1px 1px 0;
    background-color: #efefef;
    color: #000;
}

.led {
    width: 31px;
    border: 1px solid #fff;
    border-right-color: #aaa;
    border-bottom-color: #aaa;
}

.led span {
    width: 19px;
    height: 8px;
    border: 2px outset #bbb;
    background-color: #999;
}

.cell {
    border: 1px solid #aaa;
    border-right-color: #fff;
    border-bottom-color: #fff;
    padding: 3px 2px;
    line-height: 16px;
    white-space: nowrap;
}

.cell-filter {
    width: 155px;
    font-size: 13px;
    font-weight: bold;
}

.cell-a { width: 142px; }
.cell-b { width: 477px; }

.cell-key {
    width: 29px;
    text-align: center;
}

.cell-count {
    flex: 1;
    font-size: 13px;
    font-weight: bold;
    text-align: center;
}

/* barra de status */
.statusbar {
    height: 21px;
    display: flex;
    background-color: #efefef;
    color: #555;
    white-space: nowrap;
    overflow: hidden;
}

.statusbar > span {
    line-height: 20px;
}

.sb-date {
    width: 144px;
    padding-left: 12px;
    font-size: 13px;
}

.social {
    display: flex;
    gap: 7px;
    padding-left: 4px;
    border-left: 1px solid #aaa;
}

.social svg {
    width: 20px;
    height: 20px;
}

.social .cap {
    margin-left: -3px;
}

.social .cap svg {
    width: 24px;
}

.sb-link {
    padding: 3px 2px 0 4px;
    color: #111;
    text-decoration: underline;
}

.statusbar .sb-version {
    width: 234px;
    padding-left: 3px;
    border-left: 1px solid #aaa;
    line-height: 23px;
}

.sb-company {
    flex: 1;
    border-left: 1px solid #aaa;
    font-size: 13px;
    text-align: center;
}

.statusbar .sb-reg {
    width: 74px;
    padding-left: 3px;
    border-left: 1px solid #aaa;
    line-height: 23px;
    overflow: hidden;
}

/* diálogo */
.dialog {
    position: absolute;
    top: 284px;
    left: calc(50% - 268px);
    width: 536px;
    height: 220px;
    border: 1px solid #777;
    background-color: #efefef;
    color: #000;
    box-shadow: 0 4px 14px rgba(0, 0, 0, .4);
}

.dialog-title {
    height: 28px;
    display: flex;
    justify-content: space-between;
    align-items: center;
    padding: 0 10px 0 3px;
    background-color: #fff;
}

.dialog-title svg {
    width: 12px;
    height: 12px;
}

.dialog-info, .pick strong, .dialog-actions {
    font-family: "DejaVu Sans Condensed", "DejaVu Sans", sans-serif;
    font-size: 12px;
    font-weight: bold;
    white-space: nowrap;
}

.dialog-info {
    display: flex;
    justify-content: space-between;
    padding: 10px 5px 11px;
}

.pick {
    display: flex;
    align-items: center;
    height: 48px;
    margin: 0 6px 6px;
    padding: 0 4px 3px;
    border: 1px solid #1a4fae;
    font-size: 11px;
}

.pick legend {
    height: 16px;
    padding: 0 1px;
}

.pick input {
    width: 54px;
    height: 21px;
    padding: 0 1px;
    border: 1px solid #aaa;
    background-color: #fff;
}

.pick button {
    width: 21px;
    height: 21px;
    margin: 0 7px 0 3px;
    border: 1px solid #bbb;
    background-color: #e1e1e1;
}

.pick .focused {
    border: 2px solid #0055e0;
    outline: 1px dotted #222;
    outline-offset: -3px;
}

.dialog-actions {
    display: flex;
    justify-content: flex-end;
    gap: 51px;
    padding: 14px 37px;
}

.confirm { color: #008000; }
.cancel { color: #f00; }

.mark {
    position: absolute;
    mix-blend-mode: multiply;
}

.mark-yellow {
    top: 346px;
    left: calc(50% - 265px);
    width: 541px;
    height: 62px;
    background-color: #ffff66;
    border: 2px solid #ffd21a;
}

.mark-purple {
    top: 408px;
    left: calc(50% - 266px);
    width: 534px;
    height: 45px;
    background-color: #cc99ff;
    border: 1px solid #b070f0;
}
```
